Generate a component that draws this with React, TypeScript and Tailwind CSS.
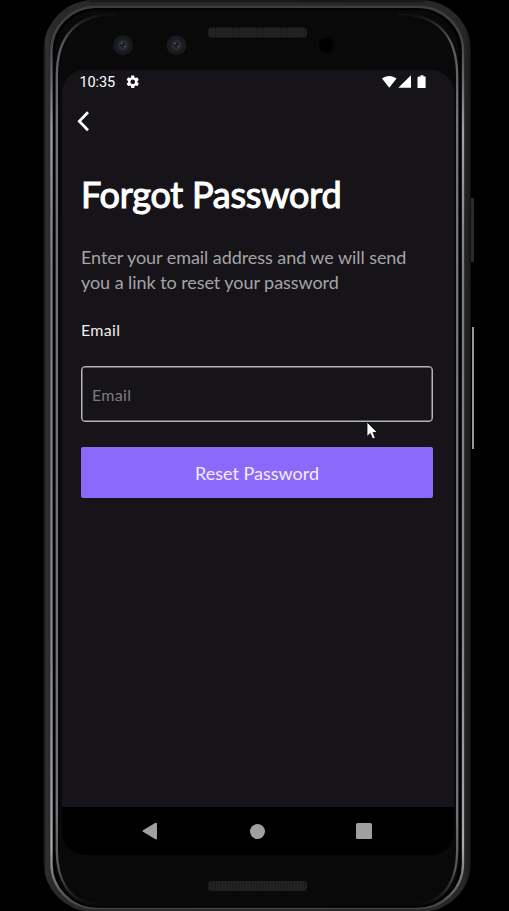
import { MdSettings } from "react-icons/md";

function PhoneFrame() {
  return (
    <svg className="pointer-events-none absolute inset-0" width="509" height="911" viewBox="0 0 509 911" fill="none">
      <defs>
        <linearGradient id="shell" x1="43" x2="472" y1="0" y2="0" gradientUnits="userSpaceOnUse">
          <stop offset="0" stopColor="#111112" />
          <stop offset="0.008" stopColor="#303032" />
          <stop offset="0.02" stopColor="#29292b" />
          <stop offset="0.98" stopColor="#252728" />
          <stop offset="0.993" stopColor="#1d1e1f" />
          <stop offset="1" stopColor="#070707" />
        </linearGradient>
        <linearGradient id="rim" x1="0" x2="0" y1="7" y2="910" gradientUnits="userSpaceOnUse">
          <stop offset="0" stopColor="#3e3e3f" />
          <stop offset="0.04" stopColor="#454547" />
          <stop offset="0.14" stopColor="#a2a2a5" />
          <stop offset="0.3" stopColor="#777b7b" />
          <stop offset="0.7" stopColor="#88888b" />
          <stop offset="0.93" stopColor="#aaaaac" />
          <stop offset="1" stopColor="#3e3e3f" />
        </linearGradient>
        <linearGradient id="inner" x1="0" x2="0" y1="14" y2="905" gradientUnits="userSpaceOnUse">
          <stop offset="0" stopColor="#0e0e0f" />
          <stop offset="0.03" stopColor="#59565f" />
          <stop offset="0.12" stopColor="#77747e" />
          <stop offset="0.9" stopColor="#76737a" />
          <stop offset="0.96" stopColor="#555258" />
          <stop offset="1" stopColor="#0a0a0a" />
        </linearGradient>
        <pattern id="mesh" width="3" height="3" patternUnits="userSpaceOnUse">
          <rect width="3" height="3" fill="#1d1d1e" />
          <rect width="1" height="3" fill="#272728" />
          <rect width="3" height="1" fill="#212122" />
        </pattern>
      </defs>
      <rect x="470" y="198" width="4" height="64" rx="1" fill="#2b2b2c" />
      <path d="M473 327V449" stroke="#999" strokeWidth="2" />
      <rect x="43.5" y="0" width="427.5" height="912" rx="50" fill="url(#shell)" />
      <path d="M90 1.2H425" stroke="#171718" strokeWidth="2" />
      <rect x="51.5" y="7" width="411.5" height="901" rx="44" fill="#020203" stroke="url(#rim)" strokeWidth="2.3" />
      <rect x="54.5" y="9" width="405" height="898" rx="43" fill="#090909" stroke="#010102" strokeWidth="1.5" />
      <path d="M116 14C78 14 56.8 34 56.8 76V850C56.8 880 69 901 94 904M398 14C436 14 457.2 34 457.2 76V850C457.2 880 445 901 420 904" stroke="url(#inner)" strokeWidth="2.3" />
      <rect x="208" y="27.5" width="99" height="10" rx="4" fill="url(#mesh)" />
      <rect x="208" y="881" width="99" height="10" rx="4" fill="url(#mesh)" />
      <circle cx="326" cy="45.5" r="7.5" fill="#010103" />
      {[123, 176.5].map((x) => (
        <g key={x}>
          <circle cx={x} cy="45.3" r="10" fill="#171b21" />
          <circle cx={x} cy="45.3" r="6" fill="#242529" />
          <circle cx={x} cy="45" r="3.5" fill="#1a1c23" stroke="#35363d" />
          <path d={`M${x - 2} 43l1.5 1M${x + 1} 46l1.5 1`} stroke="#65646c" strokeWidth="1.2" />
        </g>
      ))}
    </svg>
  );
}

function StatusBar() {
  return (
    <div className="flex h-6 items-center pr-[27.5px] pl-[17.5px] font-['Roboto',sans-serif] text-white">
      <span className="w-[45px] pt-px text-[14.5px] leading-6 tracking-[-0.1px]">10:35</span>
      <MdSettings size={15.5} className="-mt-px" />
      <svg className="ml-auto" width="46" height="16" viewBox="0 0 46 16" fill="currentColor">
        <path d="M1 4.5C5.5 1 11 1 15.5 4.5L8.3 13.8ZM30 1.2V13.8H17.3ZM37.5 2.5h2V1.2h3v1.3h2.1V14H36.5V3.5Z" />
      </svg>
    </div>
  );
}

export default function App() {
  return (
    <main className="relative h-[911px] w-[509px] overflow-hidden bg-black pt-[70px] pl-[62px] font-['Lato',sans-serif]">
      <PhoneFrame />
      <section className="relative flex h-[785px] w-[392px] flex-col overflow-hidden rounded-[23px] bg-[#161418]">
        <StatusBar />
        <button aria-label="Back" className="mt-[15px] ml-3.5 h-6 w-5 text-white">
          <svg width="20" height="24" viewBox="0 0 20 24" fill="none" stroke="currentColor" strokeWidth="2.7">
            <path d="M12 3.2L3.3 12.2L12 21.2" />
          </svg>
        </button>
        <form className="flex flex-col px-[19px] pt-[35px]" onSubmit={(e) => e.preventDefault()}>
          <h1 className="text-[36px] leading-[52px] font-normal tracking-[-0.22px] whitespace-nowrap text-white [-webkit-text-stroke:1.1px_white]">Forgot Password</h1>
          <p className="mt-[25px] text-[18px] leading-[25px] tracking-[-0.06px] whitespace-nowrap text-[#a5a4a6]">
            Enter your email address and we will send
            <br />
            you a link to reset your password
          </p>
          <label htmlFor="email" className="mt-[23px] text-[16px] leading-6 tracking-[0.3px] text-[#eeeeef]">Email</label>
          <input
            id="email"
            type="email"
            placeholder="Email"
            className="mt-[24px] h-14 w-[352px] rounded-[4px] border border-[#b4b3b5] px-2.5 text-[16px] tracking-[0.3px] text-white shadow-[inset_0_0_0_0.5px_#b4b3b5] outline-none placeholder:text-[#7d7c7f]"
          />
          <button className="mt-[25px] h-[51px] w-[352px] rounded-[2px] bg-[#8b69fb] pt-px text-[18px] text-[#f2edff]">Reset Password</button>
        </form>
        <nav className="mt-auto flex h-12 items-center justify-between bg-black pr-[82px] pl-[80px] text-[#a0a0a1]">
          <svg width="15" height="18" viewBox="0 0 15 18" fill="currentColor">
            <path d="M1 8.2L13 1.1Q15 0 15 2V16Q15 18 13 16.9L1 9.8Q0 9 1 8.2Z" />
          </svg>
          <span className="ml-px size-[15px] rounded-full bg-current" />
          <span className="size-4 rounded-[1.5px] bg-current" />
        </nav>
      </section>
      <svg className="absolute top-[421px] left-[366px]" width="12" height="19" viewBox="0 0 12 19">
        <path d="M1 1V15.5L4.3 12.4L6.7 18L9.3 16.8L7 11.5H11.3Z" fill="#fff" stroke="#09090a" strokeWidth=".8" />
      </svg>
    </main>
  );
}
